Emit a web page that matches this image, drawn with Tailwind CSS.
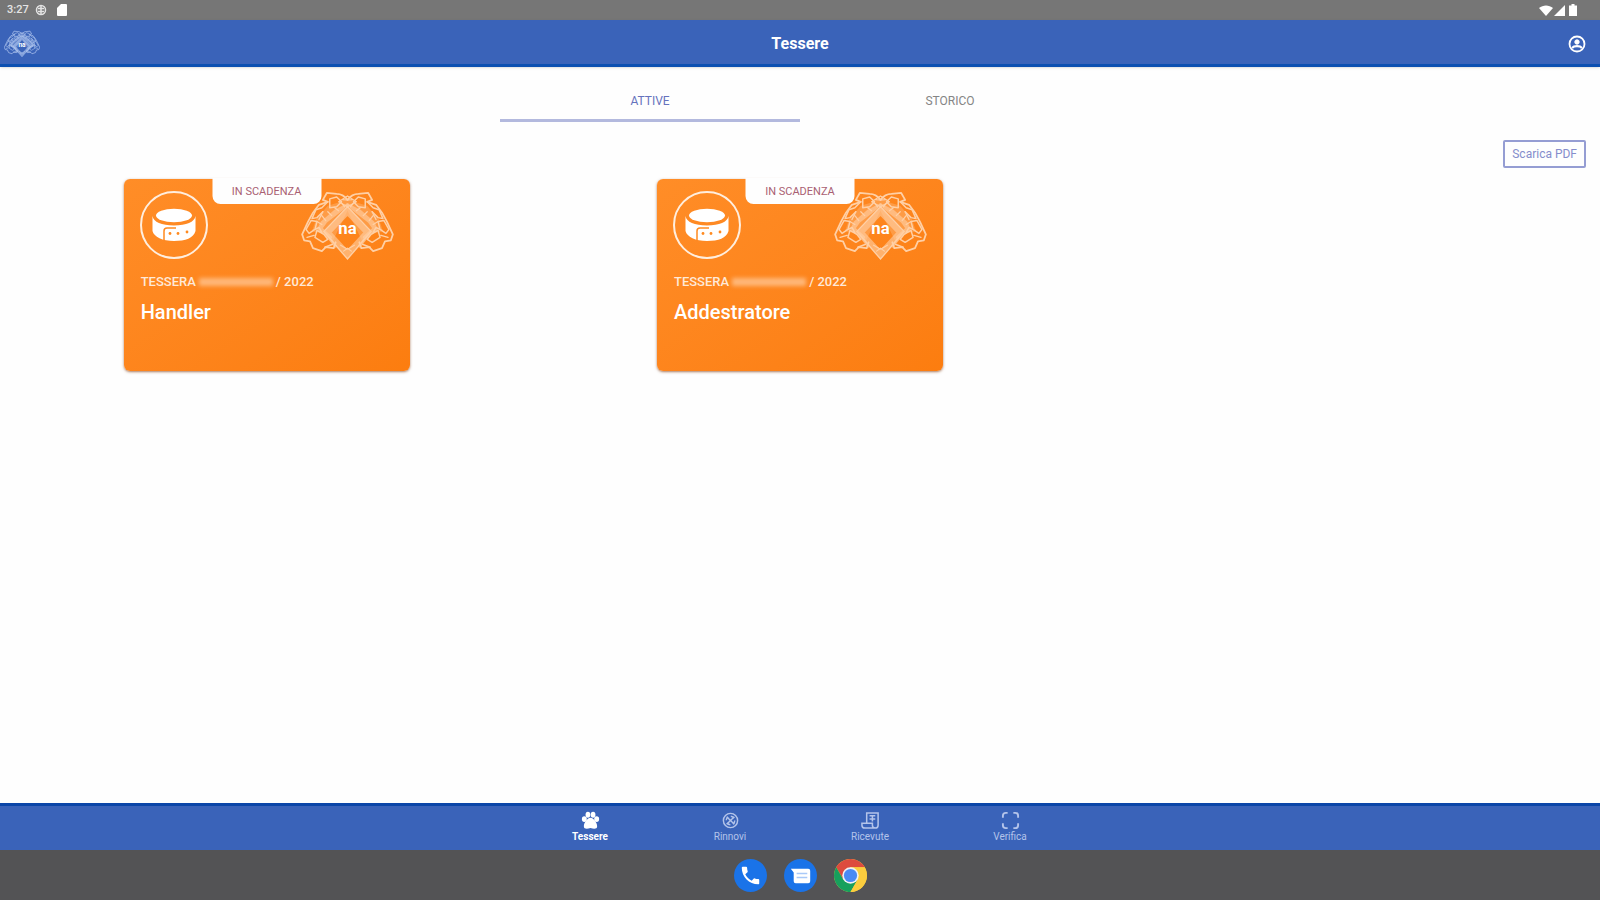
<!DOCTYPE html>
<html lang="it">
<head>
<meta charset="utf-8">
<meta name="viewport" content="width=device-width, initial-scale=1">
<title>Tessere</title>
<script src="https://cdn.jsdelivr.net/npm/@tailwindcss/browser@4"></script>
</head>
<body class="flex min-h-screen flex-col bg-[#fefefe] font-['Roboto',sans-serif]">

<!-- shared symbols -->
<svg class="hidden" aria-hidden="true">
  <symbol id="crest" viewBox="11 15 94 71">
    <g fill="none" stroke="currentColor" stroke-linejoin="round" stroke-linecap="round">
      <g id="crest-half">
        <path fill="currentColor" fill-opacity=".3" stroke="none" d="M58 24L38 30 26 44l-4 12 12 2 8 10 16-33z"/>
        <path stroke-width="1.800" d="M58 24c-3-4-7-6-11-6l-10-1-4 7 5 2-9 3-6 8-5 9-6 13 2 6 6 1 3 7 9 3 4-4 8 1 2-6"/>
        <path stroke-width="1.500" d="M40 23l7-2 5 5-5 5-7 1zM38 26l-6 6-6 2-4 9 5-1 6-6M21 45l-5 9 3 4 6-4 2-8zM25 62l8 5 5-3-4-5-7-4zM35 72l8-3M23 55l6-3 3 5M17 62l7-2"/>
        <path stroke-width="3" stroke-opacity=".6" d="M58 29l-12 6-14 12-3 7 9 7 8 10M54 32L36 46l-5 7 10 9"/>
        <path stroke-width="1.300" d="M51 26l4 5M45 32l4 3M38 36l4 4M32 40l4 5M27 46l5 3M33 36l-4 8"/>
      </g>
      <use href="#crest-half" transform="matrix(-1 0 0 1 116 0)"/>
      <path stroke-width="6" stroke-opacity=".6" stroke-linejoin="miter" d="M58 36L38 57l20 22 20-22z"/>
      <path stroke-width="1.400" stroke-linejoin="miter" d="M58 31L34 56l24 28 24-28z"/>
      <path stroke-width="1.200" d="M49 26l9-6 9 6-9 5zM53 24h10M51 70l7 4 7-4M54 76l4-3 4 3"/>
    </g>
    <text x="58" y="59" text-anchor="middle" class="fill-white font-['Roboto',sans-serif] text-[17px] font-bold">na</text>
  </symbol>
  <symbol id="collar" viewBox="0 0 68 68">
    <circle cx="34" cy="34" r="33" fill="none" stroke="#ffeede" stroke-width="2"/>
    <ellipse cx="34" cy="24.500" rx="18" ry="6.800" fill="#fff"/>
    <path fill="#fff" d="M12.500 25c1 6 9 9.500 21.500 9.500S54.500 31 55.500 25v15c-2 7-10 10-21.500 10S14 46 12.500 40z"/>
    <path fill="none" stroke="#ff8a20" stroke-width="1.500" d="M24 49v-9c0-2 1-3 3-3h9"/>
    <g fill="#ff8a20"><circle cx="30" cy="42.500" r="1.400"/><circle cx="38" cy="42.500" r="1.400"/><circle cx="47" cy="41" r="1.400"/></g>
  </symbol>
</svg>

<div class="flex h-5 items-center justify-between bg-[#767676] px-[7px] text-[#e4e4e4]">
  <div class="flex items-center gap-[6px]">
    <span class="text-[11px] leading-5 font-medium">3:27</span>
    <svg class="size-3" viewBox="0 0 12 12" fill="none" stroke="currentColor" aria-hidden="true"><circle cx="6" cy="6" r="4.500" stroke-width="1.500"/><path stroke-width="1.500" d="M3 4.500h6M3 7.500h6M6 2v8"/></svg>
    <svg class="ml-1 h-3 w-[10px]" viewBox="0 0 10 12" aria-hidden="true"><path fill="#fff" d="M4 0h5q1 0 1 1v10q0 1-1 1H1q-1 0-1-1V4z"/></svg>
  </div>
  <div class="mr-4 flex items-center text-white">
    <svg class="h-3 w-[14px]" viewBox="0 0 14 12" fill="currentColor" aria-hidden="true"><path d="M7 12L0 4C4 .500 10 .500 14 4z"/></svg>
    <svg class="h-3 w-3" viewBox="0 0 12 12" fill="currentColor" aria-hidden="true"><path d="M12 1v11H1z"/></svg>
    <svg class="ml-1 h-3 w-2" viewBox="0 0 8 12" fill="currentColor" aria-hidden="true"><path d="M2.500 0h3v1.500H8V12H0V1.500h2.500z"/></svg>
  </div>
</div>

<header class="grid h-[47px] grid-cols-3 items-center border-b-3 border-[#0b4fb1] bg-[#3a63b9] px-1 pt-1 text-white shadow-sm">
  <svg class="h-[28px] w-9 text-[#b3c8f0]" role="img" aria-label="Logo"><use href="#crest"/></svg>
  <h1 class="text-center text-base font-bold">Tessere</h1>
  <button type="button" class="mr-[6px] justify-self-end p-1" aria-label="Profilo">
    <svg class="size-[18px]" viewBox="0 0 18 18" fill="none" stroke="currentColor" aria-hidden="true"><circle cx="9" cy="9" r="7.500" stroke-width="1.800"/><circle cx="9" cy="7" r="2.200" fill="currentColor"/><path stroke-width="2.200" d="M4 13c2-2.500 8-2.500 10 0"/></svg>
  </button>
</header>

<main class="flex-1">
  <div role="tablist" class="mx-auto mt-4 flex w-full max-w-[600px] text-xs">
    <button type="button" role="tab" aria-selected="true" class="h-[39px] flex-1 border-b-3 border-[#b3b9de] text-[#6672bd]">ATTIVE</button>
    <button type="button" role="tab" aria-selected="false" class="h-[39px] flex-1 border-b-3 border-transparent text-[#858585]">STORICO</button>
  </div>
  <div class="mt-[18px] flex justify-end pr-[14px]">
    <button type="button" class="h-7 rounded-xs border-2 border-[#959dd3] px-[7px] text-xs text-[#858dcc]">Scarica PDF</button>
  </div>

  <section class="mt-[11px] grid grid-cols-3 justify-items-center">
    <article class="relative h-48 w-[286px] rounded-md bg-linear-to-br from-[#ff8d27] to-[#fc7d0f] px-[17px] pt-3 text-white shadow-sm shadow-[#8c4a20]/60">
      <span class="absolute -top-px left-1/2 h-[26px] w-[109px] -translate-x-1/2 rounded-b-lg bg-[#fefefe] text-center text-[11px] leading-[28px] text-[#a95f72]">IN SCADENZA</span>
      <div class="-mx-px flex items-start justify-between">
        <svg class="size-[68px]" aria-hidden="true"><use href="#collar"/></svg>
        <svg class="h-[70px] w-[93px] text-[#ffd0a6]" role="img" aria-label="Logo"><use href="#crest"/></svg>
      </div>
      <p class="mt-[11px] flex h-5 items-center gap-[3px] text-[13px] font-medium text-[#ffe9d8]">TESSERA <span class="h-2 w-[74px] bg-[#ffb87a] blur-[2px]"></span> / 2022</p>
      <h2 class="mt-2 text-xl leading-6 font-medium">Handler</h2>
    </article>
    <article class="relative h-48 w-[286px] rounded-md bg-linear-to-br from-[#ff8d27] to-[#fc7d0f] px-[17px] pt-3 text-white shadow-sm shadow-[#8c4a20]/60">
      <span class="absolute -top-px left-1/2 h-[26px] w-[109px] -translate-x-1/2 rounded-b-lg bg-[#fefefe] text-center text-[11px] leading-[28px] text-[#a95f72]">IN SCADENZA</span>
      <div class="-mx-px flex items-start justify-between">
        <svg class="size-[68px]" aria-hidden="true"><use href="#collar"/></svg>
        <svg class="h-[70px] w-[93px] text-[#ffd0a6]" role="img" aria-label="Logo"><use href="#crest"/></svg>
      </div>
      <p class="mt-[11px] flex h-5 items-center gap-[3px] text-[13px] font-medium text-[#ffe9d8]">TESSERA <span class="h-2 w-[74px] bg-[#ffb87a] blur-[2px]"></span> / 2022</p>
      <h2 class="mt-2 text-xl leading-6 font-medium">Addestratore</h2>
    </article>
  </section>
</main>

<nav class="flex h-[47px] justify-center border-t-3 border-[#0b46a8] bg-[#3a63b9] text-[10px] leading-3 text-[#b4c4ea]">
  <a href="#tessere" aria-current="page" class="flex w-35 flex-col items-center gap-px pt-[5px] font-bold text-white">
    <svg class="size-[19px]" viewBox="0 0 20 20" fill="currentColor" aria-hidden="true"><ellipse cx="3.500" cy="8.500" rx="2.600" ry="3"/><ellipse cx="7.300" cy="4" rx="2.500" ry="3.200"/><ellipse cx="12.700" cy="4" rx="2.500" ry="3.200"/><ellipse cx="16.500" cy="8.500" rx="2.600" ry="3"/><path d="M10 7c3 0 7 5 7 9 0 3-3 3-7 2-4 1-7 1-7-2 0-4 4-9 7-9z"/></svg>
    Tessere
  </a>
  <a href="#rinnovi" class="flex w-35 flex-col items-center gap-px pt-[5px]">
    <svg class="size-[19px]" viewBox="0 0 20 20" fill="none" stroke="currentColor" stroke-width="1.500" aria-hidden="true"><circle cx="10" cy="10" r="7.500"/><circle cx="10" cy="10" r="4.500" stroke-dasharray="4 3"/><path d="M6 6l8 8M14 6l-8 8"/></svg>
    Rinnovi
  </a>
  <a href="#ricevute" class="flex w-35 flex-col items-center gap-px pt-[5px]">
    <svg class="size-[19px]" viewBox="0 0 20 20" fill="none" stroke="currentColor" stroke-width="1.600" aria-hidden="true"><path d="M6 12V2h12v13q0 3-3 3H4q-3 0-3-3v-2h11v2q0 3 3 3M9 5h6M9 8.500h6M12 5v6"/></svg>
    Ricevute
  </a>
  <a href="#verifica" class="flex w-35 flex-col items-center gap-px pt-[5px]">
    <svg class="size-[19px]" viewBox="0 0 20 20" fill="none" stroke="currentColor" stroke-width="2" aria-hidden="true"><path d="M2 7V5q0-3 3-3h2M13 2h2q3 0 3 3v2M18 13v2q0 3-3 3h-2M7 18H5q-3 0-3-3v-2"/></svg>
    Verifica
  </a>
</nav>

<footer class="flex h-[50px] items-center justify-center gap-[17px] bg-[#535355]">
  <button type="button" aria-label="Telefono">
    <svg class="size-[33px]" viewBox="0 0 34 34" aria-hidden="true"><circle cx="17" cy="17" r="17" fill="#1a73e8"/><path fill="#fff" transform="translate(5 5)" d="M6.600 10.800c1.400 2.800 3.800 5.100 6.600 6.600l2.200-2.200c.3-.3.700-.4 1-.2 1.100.4 2.300.6 3.600.6.600 0 1 .4 1 1V20c0 .6-.4 1-1 1C10.600 21 3 13.400 3 4c0-.6.400-1 1-1h3.500c.6 0 1 .4 1 1 0 1.300.2 2.500.6 3.600.1.300 0 .7-.2 1z"/></svg>
  </button>
  <button type="button" aria-label="Messaggi">
    <svg class="size-[33px]" viewBox="0 0 34 34" aria-hidden="true"><circle cx="17" cy="17" r="17" fill="#1a73e8"/><path fill="#fff" d="M7 10h18q2 0 2 2v11q0 2-2 2H12q-2 0-2-2v-9z"/><path stroke="#a9c9f8" stroke-width="1.500" d="M13 15h11M13 19h11"/></svg>
  </button>
  <button type="button" aria-label="Chrome">
    <svg class="size-[33px]" viewBox="0 0 34 34" aria-hidden="true"><circle cx="17" cy="17" r="17" fill="#fbcd3e"/><path fill="#dd4b3e" d="M2.300 8.500A17 17 0 0 1 31.700 8.500H17L9.600 21.200z"/><path fill="#17a05d" d="M2.300 8.500A17 17 0 0 0 17 34l7.400-12.800H9.600z"/><path fill="#fbcd3e" d="M31.700 8.500A17 17 0 0 1 17 34l7.400-12.800L17 8.500z"/><circle cx="17" cy="17" r="8.500" fill="#f1f1f1"/><circle cx="17" cy="17" r="6.800" fill="#4a8af4"/></svg>
  </button>
</footer>
</body>
</html>
